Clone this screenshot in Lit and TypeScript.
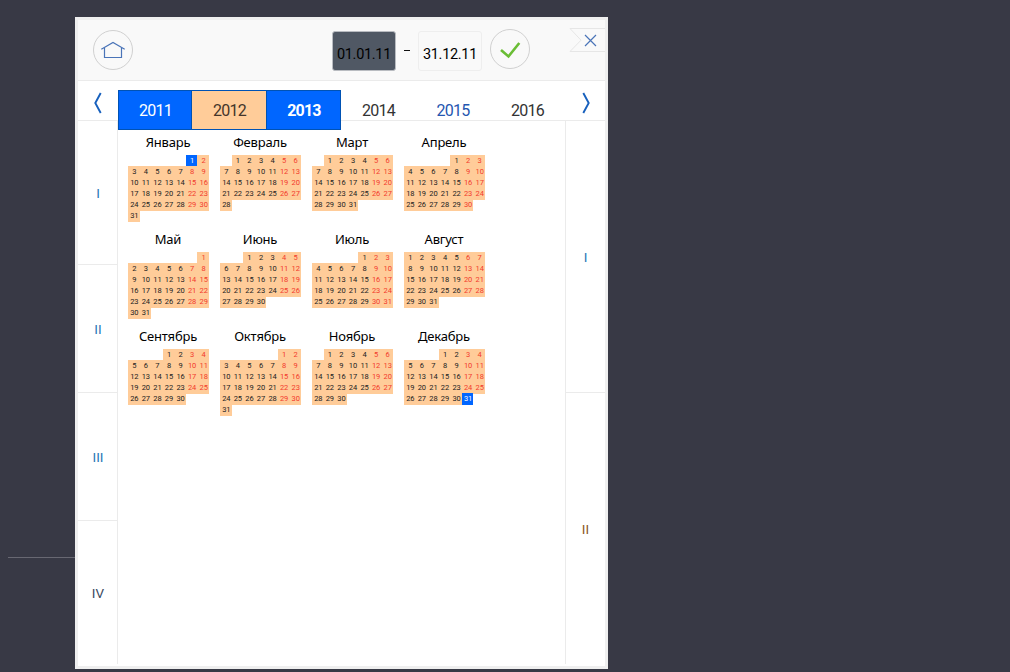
import { LitElement, html, css } from "lit";
import { customElement } from "lit/decorators.js";
import { classMap } from "lit/directives/class-map.js";

const MONTHS = ["Январь", "Февраль", "Март", "Апрель", "Май", "Июнь", "Июль", "Август", "Сентябрь", "Октябрь", "Ноябрь", "Декабрь"];
const YEAR = 2011;

@customElement("month-grid")
class MonthGrid extends LitElement {
  static properties = { month: { type: Number } };
  declare month: number;
  static styles = css`
    :host { display: block; width: 81px; height: 97px; }
    .name { height: 23px; font: 13px/21px "Noto Sans", "Open Sans", sans-serif; color: #000; display: flex; justify-content: center; white-space: nowrap; letter-spacing: -0.2px; margin-right: 1px; }
    .days { display: grid; grid-template-columns: repeat(7, 11.5714px); grid-auto-rows: 11px; font: 7.5px/11px Roboto, sans-serif; color: #222; }
    .day { background: #fc9; box-shadow: 0 1px #fc9; text-align: center; padding-left: 1px; letter-spacing: -0.1px; }
    .off { color: #f23a2c; }
    .edge { background: #06f; box-shadow: 0 1px #06f; color: #fff; }
  `;
  render() {
    const start = (new Date(YEAR, this.month, 1).getDay() + 6) % 7;
    const count = new Date(YEAR, this.month + 1, 0).getDate();
    const cells = [];
    for (let i = 0; i < start; i++) cells.push(html`<span></span>`);
    for (let d = 1; d <= count; d++) {
      const edge = (this.month === 0 && d === 1) || (this.month === 11 && d === 31);
      cells.push(html`<span class=${classMap({ day: true, off: (start + d - 1) % 7 > 4, edge })}>${d}</span>`);
    }
    return html`<div class="name">${MONTHS[this.month]}</div><div class="days">${cells}</div>`;
  }
}

@customElement("app-root")
class AppRoot extends LitElement {
  static styles = css`
    * { box-sizing: border-box; }
    :host { display: block; width: 1010px; height: 672px; background: #383945; overflow: hidden; font-family: Roboto, sans-serif; }
    .page { display: flex; padding-top: 17px; height: 672px; }
    .rule { width: 67px; height: 1px; margin: 540px 0 0 8px; background: #686872; flex: none; }
    .panel { width: 533px; height: 652px; border: 3px solid #efefef; background: #fff; display: flex; flex-direction: column; flex: none; }
    .head { height: 61px; background: #f9f9f9; border-bottom: 1px solid #ebebeb; display: flex; flex: none; }
    .head svg { display: block; flex: none; }
    .home { margin: 10px 0 0 15px; }
    .date { width: 64px; height: 40px; margin-top: 11px; border: 1px solid #eee; border-radius: 3px; font-size: 14.5px; line-height: 45px; text-align: center; color: #000; letter-spacing: -0.3px; flex: none; white-space: nowrap; }
    .from { margin-left: 199px; background: #505864; border-color: #b9bcc1; }
    .dash { width: 22px; padding-top: 30px; display: flex; justify-content: center; flex: none; }
    .dash i { width: 6px; height: 1px; background: #111; }
    .ok { margin: 9px 0 0 8px; }
    .close { margin: 8px 0 0 39px; }
    .years { display: flex; height: 40px; flex: none; }
    .arrow { width: 40px; border-bottom: 1px solid #ebebeb; flex: none; }
    .arrow svg { display: block; }
    .tabs { width: 447px; display: grid; grid-template-columns: 74px 75px 74px 75px 74px 75px; z-index: 1; }
    .tab { height: 40px; border-bottom: 1px solid #ebebeb; font-size: 16px; line-height: 60px; letter-spacing: -0.8px; text-align: center; color: #333; }
    .sel { margin-top: 9px; line-height: 40px; border: 1px solid #0052b4; border-left-width: 0; background: #06f; color: #fff; padding-left: 1px; }
    .tab.first { border-left-width: 1px; }
    .mid { background: #fc9; color: #44352a; }
    .bold { font-weight: 700; }
    .link { color: #2456b0; }
    .body { flex: none; height: 543px; display: flex; }
    .side { width: 40px; display: flex; flex-direction: column; font-size: 13.5px; color: #2a78b5; }
    .left { border-right: 1px solid #ebebeb; }
    .right { border-left: 1px solid #ebebeb; }
    .part { display: flex; align-items: center; justify-content: center; border-bottom: 1px solid #ebebeb; padding: 1px 0 0 1px; }
    .right .part { padding-left: 0; }
    .part:last-child { border-bottom: 0; }
    .tall { height: 144px; flex: none; }
    .short { height: 128px; flex: none; }
    .last { height: 143px; }
    .half { height: 272px; flex: none; }
    .half:last-child { height: 271px; }
    .dark { color: #3c4a60; }
    .brown { color: #8a5a25; }
    .months { width: 447px; padding: 11px 0 0 10px; display: grid; grid-template-columns: repeat(4, 92px); grid-auto-rows: 97px; align-content: start; }
  `;
  render() {
    return html`<div class="page">
      <div class="rule"></div>
      <div class="panel">
        <div class="head">
          <svg class="home" width="40" height="40" fill="none"><circle cx="20" cy="20" r="19.5" stroke="#d0d0d0" /><path d="M8.3 19.3L20 12.4L31.7 19.3M11.5 18V27.5H28.5V18" stroke="#4a74b8" stroke-width="1.2" /></svg>
          <div class="date from">01.01.11</div>
          <div class="dash"><i></i></div>
          <div class="date">31.12.11</div>
          <svg class="ok" width="40" height="40" fill="none"><circle cx="20" cy="20" r="19.5" stroke="#d0d0d0" /><path d="M11 21L18.5 27.5L29.3 14" stroke="#6abd35" stroke-width="2.6" /></svg>
          <svg class="close" width="36" height="25" fill="none"><path d="M36 .5H1L12 12.2L1 23.5H36" stroke="#e6e6e6" /><path d="M16 7L27 18M27 7L16 18" stroke="#4a74b8" stroke-width="1.2" /></svg>
        </div>
        <div class="years">
          <div class="arrow"><svg width="40" height="39" fill="none"><path d="M22.7 12L17.3 22L22.7 32" stroke="#1760bd" stroke-width="1.9" /></svg></div>
          <div class="tabs">
            <div class="tab sel first">2011</div><div class="tab sel mid">2012</div><div class="tab sel bold">2013</div>
            <div class="tab">2014</div><div class="tab link">2015</div><div class="tab">2016</div>
          </div>
          <div class="arrow"><svg width="40" height="39" fill="none"><path d="M18.3 12L23.7 22L18.3 32" stroke="#1760bd" stroke-width="1.9" /></svg></div>
        </div>
        <div class="body">
          <div class="side left"><div class="part tall">I</div><div class="part short">II</div><div class="part short">III</div><div class="part dark last">IV</div></div>
          <div class="months">${MONTHS.map((_, i) => html`<month-grid .month=${i}></month-grid>`)}</div>
          <div class="side right"><div class="part half">I</div><div class="part half brown">II</div></div>
        </div>
      </div>
    </div>`;
  }
}
